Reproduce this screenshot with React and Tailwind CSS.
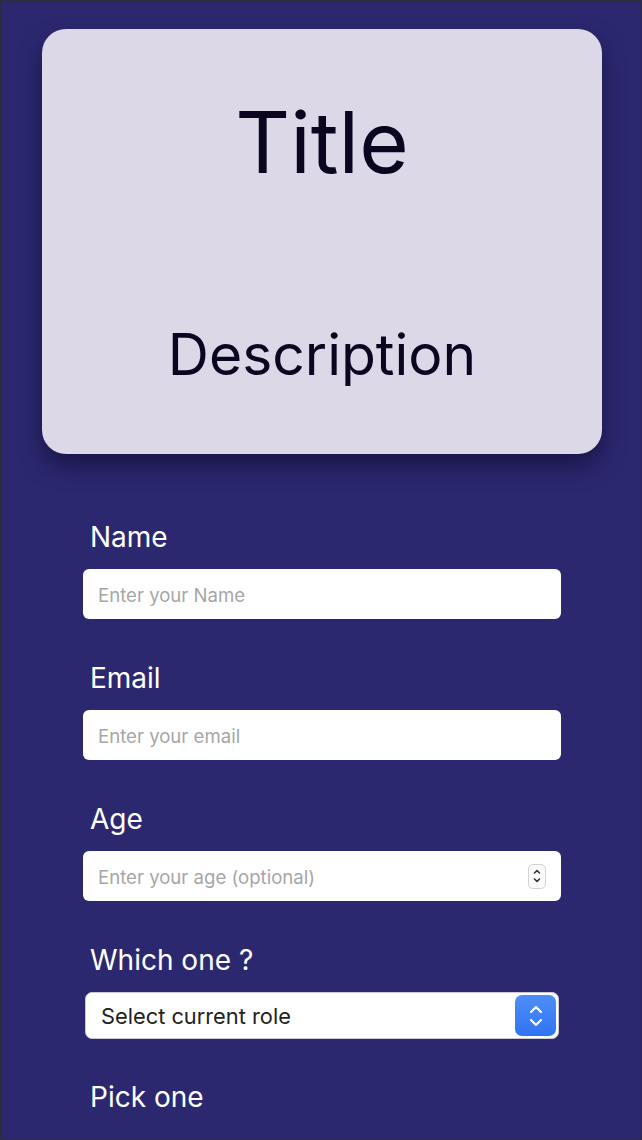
import React from "react"

function Label({ children }) {
  return (
    <label className="block pl-[7px] text-[28px] leading-none text-white">
      {children}
    </label>
  )
}

function TextField({ placeholder, spinner }) {
  return (
    <div className="mt-[18px] flex h-[50px] items-center rounded-[6px] bg-white pl-[15px] pr-[15px]">
      <input
        type="text"
        placeholder={placeholder}
        className="w-full bg-transparent pt-[3px] text-[18.6px] text-[#222] outline-none placeholder:text-[#a6a6a6]"
      />
      {spinner && (
        <div className="flex h-[25px] w-[18px] shrink-0 flex-col items-center justify-center rounded-[5px] border border-[#d4d4d4] bg-[#fafafa]">
          <svg width="10" height="20" viewBox="0 0 10 20" fill="none" stroke="#333" strokeWidth="1.6" strokeLinecap="round" strokeLinejoin="round">
            <path d="M2.5 7 L5 4.5 L7.5 7" />
            <path d="M2.5 13 L5 15.5 L7.5 13" />
          </svg>
        </div>
      )}
    </div>
  )
}

export default function App() {
  return (
    <div
      className="h-[1140px] overflow-hidden border border-[#2a2d3a] bg-[#2c2870]"
      style={{ fontFamily: "Inter, 'Open Sans', sans-serif" }}
    >
      <div className="ml-[41px] mr-[39px] mt-[28px] flex h-[425px] flex-col items-center rounded-[24px] bg-[#dcd8e8] pt-[71px] shadow-[0_12px_22px_rgba(10,8,40,0.55)]">
        <h1 className="text-[85px] leading-none font-normal text-[#0b0620]">Title</h1>
        <p className="mt-[141px] text-[57px] leading-none text-[#0b0620]">Description</p>
      </div>

      <form className="ml-[82px] mr-[80px] mt-[69px]">
        <Label>Name</Label>
        <TextField placeholder="Enter your Name" />

        <div className="mt-[45px]">
          <Label>Email</Label>
          <TextField placeholder="Enter your email" />
        </div>

        <div className="mt-[45px]">
          <Label>Age</Label>
          <TextField placeholder="Enter your age (optional)" spinner />
        </div>

        <div className="mt-[45px]">
          <Label>Which one ?</Label>
          <div className="mx-[2px] mt-[18px] flex h-[47px] items-center justify-between rounded-[7px] border border-[#c9c9d6] bg-white pl-[15px] pr-[2px]">
            <span className="pt-[2px] text-[21.8px] text-[#222]">Select current role</span>
            <div className="flex h-[41px] w-[41px] items-center justify-center rounded-[7px] bg-gradient-to-b from-[#4f8ef7] to-[#2f74f3]">
              <svg width="18" height="26" viewBox="0 0 18 26" fill="none" stroke="white" strokeWidth="2.2" strokeLinecap="round" strokeLinejoin="round">
                <path d="M4 9 L9 4 L14 9" />
                <path d="M4 17 L9 22 L14 17" />
              </svg>
            </div>
          </div>
        </div>

        <div className="mt-[44px]">
          <Label>Pick one</Label>
        </div>
      </form>
    </div>
  )
}
